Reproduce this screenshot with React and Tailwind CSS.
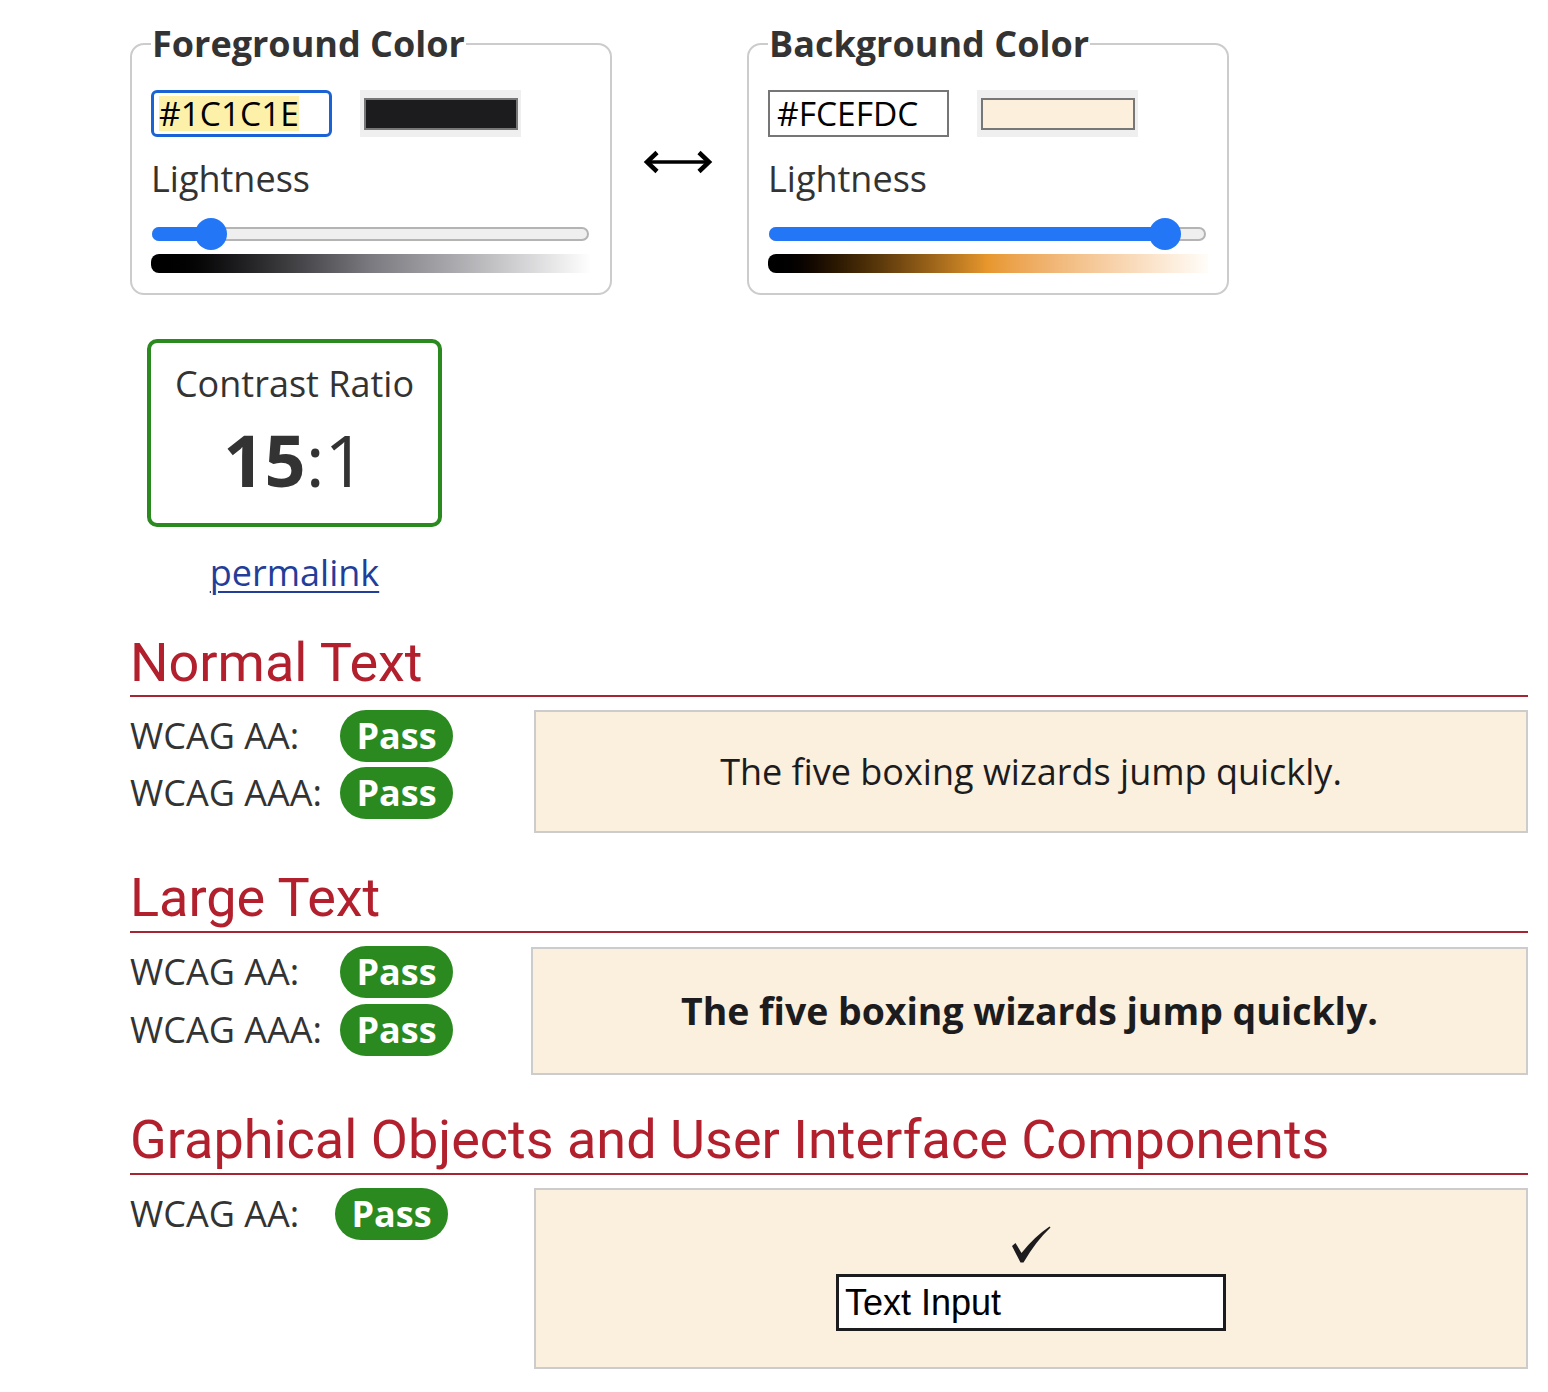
import React from "react";

function ColorFieldset({ title, hex, focused, swatchClass, pct, gradientClass }) {
  return (
    <fieldset className="m-0 w-[482px] rounded-[14px] border-2 border-[#cccccc] px-[19px] pb-[20px]">
      <legend className="px-[1px] text-[36px] font-bold leading-[44px] text-[#333333]">{title}</legend>
      <div className="mt-[24px] flex gap-[28px]">
        {focused ? (
          <div className="flex h-[47px] w-[181px] items-center rounded-[6px] border-[3px] border-[#1b63d4] bg-white pl-[5px]">
            <span className="bg-[#fdf1aa] text-[33.5px] leading-[35px] text-black">{hex}</span>
          </div>
        ) : (
          <div className="flex h-[47px] w-[181px] items-center border-2 border-[#767676] bg-white pl-[7px]">
            <span className="text-[33.5px] leading-[35px] text-black">{hex}</span>
          </div>
        )}
        <div className="h-[47px] w-[161px] bg-[#efefef] pb-[7px] pl-[4px] pr-[3px] pt-[8px]">
          <div className={"h-full border-2 border-[#777777] " + swatchClass} />
        </div>
      </div>
      <div className="mt-[18px] text-[36px] leading-[48px] text-[#333333]">Lightness</div>
      <div className="relative mt-[15px] h-[32px]">
        <div className="absolute left-[1px] right-[2px] top-[9px] h-[14px] rounded-full border-2 border-[#b4b4b4] bg-[#efefef]" />
        <div className="absolute left-[1px] top-[9px] h-[14px] rounded-full bg-[#2377f7]" style={{ width: `${pct}%` }} />
        <div
          className="absolute top-0 h-[32px] w-[32px] -translate-x-1/2 rounded-full bg-[#2377f7]"
          style={{ left: `${pct}%` }}
        />
      </div>
      <div className={"mt-[4px] h-[19px] rounded-l-[8px] " + gradientClass} />
    </fieldset>
  );
}

function Pill() {
  return (
    <div className="flex h-[52px] w-[113px] items-center justify-center rounded-full bg-[#2a8a1f] text-[36px] font-bold leading-none text-white">
      Pass
    </div>
  );
}

function Row({ label, labelWidth = "w-[210px]" }) {
  return (
    <div className="flex h-[52px] items-center">
      <div className={"text-[36px] leading-[48px] text-[#333333] " + labelWidth}>{label}</div>
      <Pill />
    </div>
  );
}

function Heading({ children, className = "" }) {
  return (
    <h2 className={"border-b-2 border-[#a52633] font-['Roboto',sans-serif] text-[54px] font-normal leading-[64px] text-[#b21f2d] " + className}>
      {children}
    </h2>
  );
}

function CheckMark() {
  return (
    <svg width="42" height="40" viewBox="0 0 42 40" aria-hidden="true">
      <path d="M2 21 L5.5 18 L11.5 28 Q24 12 39.5 1.5 L40.5 2.5 Q26 16 13.5 37.5 L10.5 37.5 Z" fill="#1c1c1e" />
    </svg>
  );
}

export default function App() {
  return (
    <div className="min-h-[1392px] bg-white pb-[20px] pl-[130px] pr-[20px] pt-[22px] font-['Open_Sans',sans-serif] text-[#333333]">
      {/* Top: colour pickers */}
      <div className="flex items-start">
        <ColorFieldset
          title="Foreground Color"
          hex="#1C1C1E"
          focused
          swatchClass="bg-[#1c1c1e]"
          pct={13.7}
          gradientClass="bg-linear-to-r from-[#000000] via-[#7a7a80] to-[#ffffff]"
        />
        <div className="flex w-[135px] justify-center pr-[4px] pt-[127px]">
          <svg width="70" height="26" viewBox="0 0 70 26" aria-hidden="true">
            <path d="M4 13 H66" stroke="#000" strokeWidth="3.5" fill="none" />
            <path d="M14 3.5 L4 13 L14 22.5" stroke="#000" strokeWidth="4.5" fill="none" strokeLinejoin="miter" />
            <path d="M56 3.5 L66 13 L56 22.5" stroke="#000" strokeWidth="4.5" fill="none" strokeLinejoin="miter" />
          </svg>
        </div>
        <ColorFieldset
          title="Background Color"
          hex="#FCEFDC"
          swatchClass="bg-[#fcefdc]"
          pct={90.2}
          gradientClass="bg-linear-to-r from-[#000000] via-[#e8972c] to-[#fffdf9]"
        />
      </div>

      {/* Contrast ratio */}
      <div className="ml-[17px] mt-[44px] flex w-[295px] flex-col items-center">
        <div className="flex h-[188px] w-[295px] flex-col items-center rounded-[10px] border-4 border-[#2a8a1f] pt-[17px]">
          <div className="text-[36px] leading-[48px] text-[#333333]">Contrast Ratio</div>
          <div className="mt-[11px] text-[72px] leading-[80px] text-[#333333]">
            <span className="font-bold">15</span>
            <span>:1</span>
          </div>
        </div>
        <a href="#" className="mt-[22px] text-[36px] leading-[48px] text-[#233d9a] underline decoration-2 underline-offset-[5px]">
          permalink
        </a>
      </div>

      {/* Normal text */}
      <Heading className="mt-[34px]">Normal Text</Heading>
      <div className="mt-[13px] flex items-start">
        <div className="flex w-[404px] flex-col gap-[5px]">
          <Row label="WCAG AA:" />
          <Row label="WCAG AAA:" />
        </div>
        <div className="flex h-[123px] flex-1 items-center justify-center border-2 border-[#cccccc] bg-[#fbefdd]">
          <span className="text-[36px] leading-[48px] text-[#1c1c1e]">The five boxing wizards jump quickly.</span>
        </div>
      </div>

      {/* Large text */}
      <Heading className="mt-[33px] pb-[1px]">Large Text</Heading>
      <div className="mt-[13px] flex items-start">
        <div className="flex w-[401px] flex-col gap-[6px]">
          <Row label="WCAG AA:" />
          <Row label="WCAG AAA:" />
        </div>
        <div className="mt-[1px] flex h-[128px] flex-1 items-center justify-center border-2 border-[#cccccc] bg-[#fbefdd]">
          <span className="text-[37.4px] font-bold leading-[52px] text-[#1c1c1e]">The five boxing wizards jump quickly.</span>
        </div>
      </div>

      {/* Graphical objects */}
      <Heading className="mt-[33px] pb-[1px]">Graphical Objects and User Interface Components</Heading>
      <div className="mt-[13px] flex items-start">
        <div className="flex w-[404px] flex-col">
          <Row label="WCAG AA:" labelWidth="w-[205px]" />
        </div>
        <div className="flex h-[181px] flex-1 flex-col items-center border-2 border-[#cccccc] bg-[#fbefdd] pt-[35px]">
          <CheckMark />
          <div className="mt-[9px] flex h-[57px] w-[390px] items-center border-[3px] border-[#1c1c1e] bg-white pl-[6px]">
            <span className="font-['Liberation_Sans',Arial,sans-serif] text-[36px] leading-[40px] text-black">Text Input</span>
          </div>
        </div>
      </div>
    </div>
  );
}
